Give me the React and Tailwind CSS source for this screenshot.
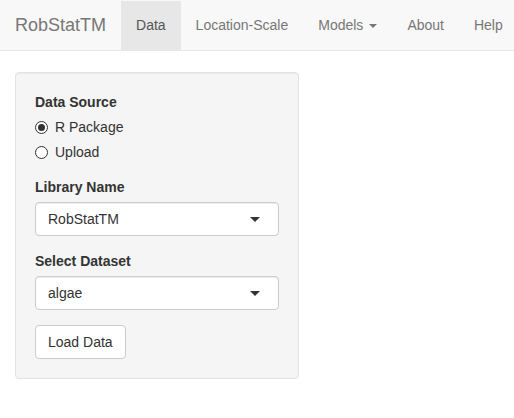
export default function App() {
  const font = { fontFamily: '"Liberation Sans", Arial, sans-serif' };
  const Caret = () => (
    <span className="block w-0 h-0 border-t-[5px] border-t-[#333] border-x-[5px] border-x-transparent" />
  );
  const Select = ({ value }) => (
    <div className="mt-[5px] flex h-[34px] w-[244px] items-center justify-between rounded-[4px] border border-[#ccc] bg-white pl-[12px] pr-[18px] text-[14px] text-[#333] shadow-[inset_0_1px_1px_rgba(0,0,0,0.075)]">
      <span>{value}</span>
      <Caret />
    </div>
  );
  const Radio = ({ checked, label, mt }) => (
    <div className={`flex h-[20px] items-center ${mt}`}>
      <span className="flex h-[13px] w-[13px] items-center justify-center rounded-full border border-[#333] bg-white">
        {checked && <span className="block h-[7px] w-[7px] rounded-full bg-[#333]" />}
      </span>
      <span className="ml-[7px] text-[14px] text-[#333]">{label}</span>
    </div>
  );
  const item = "flex h-[50px] shrink-0 items-center whitespace-nowrap px-[15px] text-[14px]";
  return (
    <div style={font} className="min-h-[418px] w-[514px] overflow-hidden bg-white">
      <nav className="flex h-[51px] overflow-hidden border-b border-[#e7e7e7] bg-[#f8f8f8] text-[#777]">
        <div className="flex h-[50px] shrink-0 items-center whitespace-nowrap px-[15px] text-[18px]">RobStatTM</div>
        <div className="mt-px flex h-[49px] shrink-0 items-center bg-[#e7e7e7] px-[15px] text-[14px] text-[#555]">Data</div>
        <div className={item}>Location-Scale</div>
        <div className={item}>
          Models
          <span className="ml-[6px] mt-[2px] block h-0 w-0 border-x-[4px] border-t-[4px] border-x-transparent border-t-[#777]" />
        </div>
        <div className={item}>About</div>
        <div className={item}>Help</div>
      </nav>
      <div className="px-[15px] pt-[21px]">
        <div className="w-[284px] rounded-[4px] border border-[#e3e3e3] bg-[#f5f5f5] p-[19px] shadow-[inset_0_1px_1px_rgba(0,0,0,0.05)]">
          <div className="h-[20px] text-[14px] font-bold leading-[20px] text-[#333]">Data Source</div>
          <Radio checked label="R Package" mt="mt-[5px]" />
          <Radio label="Upload" mt="mt-[5px]" />
          <div className="mt-[15px] h-[20px] text-[14px] font-bold leading-[20px] text-[#333]">Library Name</div>
          <Select value="RobStatTM" />
          <div className="mt-[15px] h-[20px] text-[14px] font-bold leading-[20px] text-[#333]">Select Dataset</div>
          <Select value="algae" />
          <button className="mt-[15px] flex h-[34px] items-center rounded-[4px] border border-[#ccc] bg-white px-[12px] text-[14px] text-[#333]">
            Load Data
          </button>
        </div>
      </div>
    </div>
  );
}
